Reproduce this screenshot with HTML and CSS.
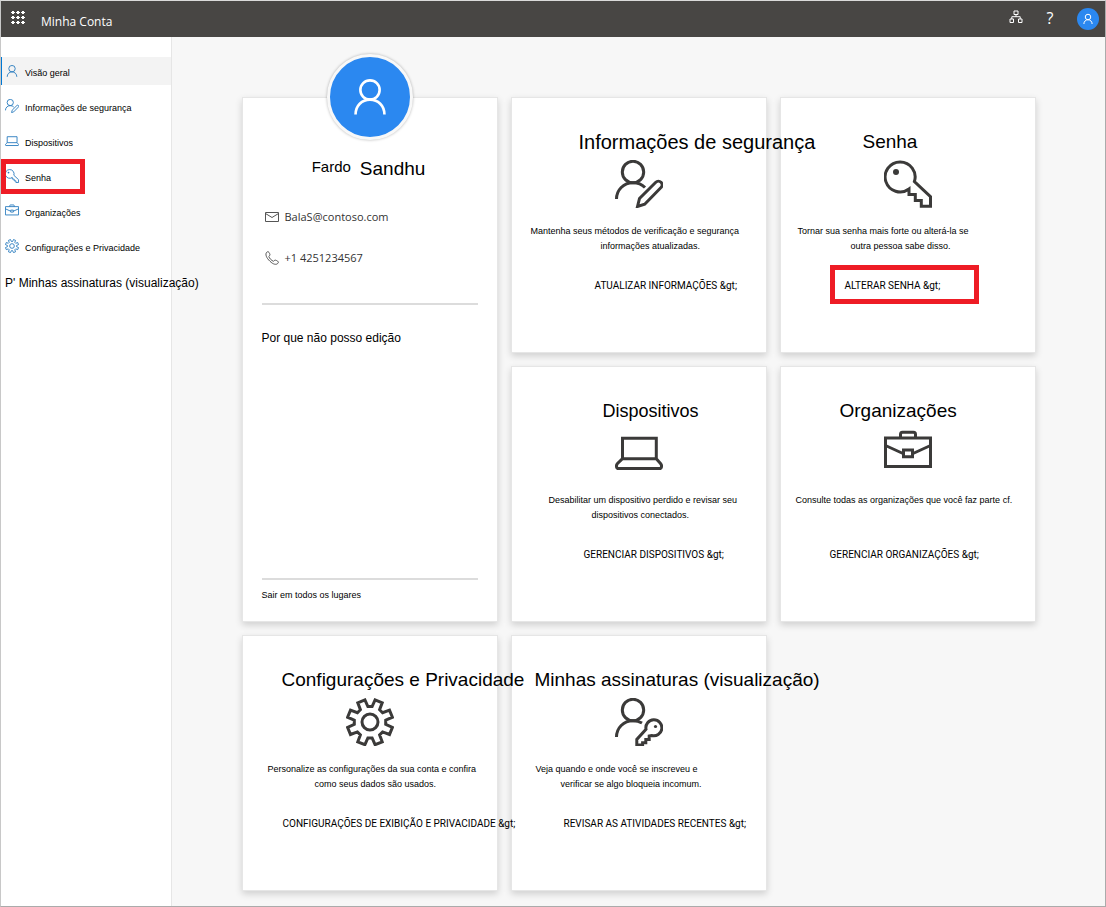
FILE: index.html
```html
<!DOCTYPE html>
<html lang="pt">
<head>
<meta charset="utf-8">
<title>Minha Conta</title>
<meta name="viewport" content="width=device-width, initial-scale=1">
<link rel="stylesheet" href="styles.css">
</head>
<body>
<svg class="sprite" aria-hidden="true">
  <symbol id="person" viewBox="0 0 48 48"><circle cx="24" cy="16" r="11"/><path d="M7.500 44c0-10 7.300-17 16.500-17s16.500 7 16.500 17"/></symbol>
  <symbol id="person-edit" viewBox="0 0 48 48"><circle cx="18" cy="12" r="10.7"/><path d="M1.500 39c0-9 7-16.300 16.500-16.300 5 0 9 1.700 12 4.800M22.500 46.500l2-8L40.800 22.300a3.600 3.600 0 0 1 5.200 5.200L29.700 44.300z"/></symbol>
  <symbol id="laptop" viewBox="0 0 48 48"><path d="M7.500 9.300h33.800v20.400H7.500zM7.500 29.700l-5.200 5c-1.600 2-.8 4.800 1 4.800h41.400c1.800 0 2.600-2.800 1-4.800l-4.400-5"/></symbol>
  <symbol id="key" viewBox="0 0 48 48"><circle class="solid" cx="12" cy="12" r="3"/><path d="M30.400 21.500A15 15 0 1 0 25 29v5.500h6.300v6h6v5.700h9.200v-9.500z"/></symbol>
  <symbol id="briefcase" viewBox="0 0 48 48"><path d="M1.500 9h45v28.500h-45zM16.500 9V5.500c0-1.500.5-2.200 2-2.200h11c1.500 0 2 .7 2 2.200V9M1.500 16.500 19 24.500M46.500 16.500 29 24.500M19.500 21h9v6.700h-9z"/></symbol>
  <symbol id="gear" viewBox="0 0 48 48"><circle cx="24" cy="24" r="8"/><path d="M11.800 4.800 18.900 1.900 21.900 8.600h4.200l3-6.700 7.100 2.900-2.600 6.900 3 3 6.900-2.600 2.900 7.100-6.700 3v4.200l6.700 3-2.900 7.100-6.900-2.600-3 3 2.600 6.900-7.100 2.900-3-6.700h-4.200l-3 6.700-7.100-2.900 2.600-6.900-3-3-6.900 2.600-2.900-7.100 6.700-3v-4.200l-6.700-3 2.900-7.100 6.900 2.600 3-3z"/></symbol>
  <symbol id="person-key" viewBox="0 0 48 48"><circle cx="18" cy="12" r="10.700"/><path d="M1.500 39c0-9 7-16.300 16.500-16.300 3.500 0 6.500.8 9 2.300M31 31.300a8 8 0 1 1 5.600 6.200l-2.400.5v3.500h-3.400v3.200h-3.200v2.200h-5.800v-5.500z"/><circle class="solid" cx="40.500" cy="28.500" r="1.600"/></symbol>
</svg>

<div class="app">
  <header class="topbar">
    <button class="topbar__button" aria-label="Aplicativos">
      <svg class="waffle" viewBox="0 0 14 14"><path d="M1 0h2v3H1zM0 1h4v1H0zM6 0h2v3H6zM5 1h4v1H5zM11 0h2v3h-2zM10 1h4v1h-4zM1 5h2v3H1zM0 6h4v1H0zM6 5h2v3H6zM5 6h4v1H5zM11 5h2v3h-2zM10 6h4v1h-4zM1 10h2v3H1zM0 11h4v1H0zM6 10h2v3H6zM5 11h4v1H5zM11 10h2v3h-2zM10 11h4v1h-4z"/></svg>
    </button>
    <span class="topbar__title">Minha Conta</span>
    <div class="topbar__tools">
      <button class="topbar__button" aria-label="Organização">
        <svg class="tool-icon" viewBox="0 0 14 14"><path d="M5 1h4v3.500H5zM1 9h3.500v3.500H1zM9.500 9H13v3.500H9.500zM7 4.500v2.200M2.800 9V6.700h8.400V9"/></svg>
      </button>
      <button class="topbar__button topbar__help" aria-label="Ajuda">?</button>
      <button class="topbar__button topbar__user" aria-label="Conta"><svg class="user-icon"><use href="#person"/></svg></button>
    </div>
  </header>

  <div class="body">
    <nav class="sidebar">
      <a class="nav nav--current" href="#"><svg class="nav__icon"><use href="#person"/></svg><span class="nav__text">Visão geral</span></a>
      <a class="nav" href="#"><svg class="nav__icon"><use href="#person-edit"/></svg><span class="nav__text">Informações de segurança</span></a>
      <a class="nav" href="#"><svg class="nav__icon"><use href="#laptop"/></svg><span class="nav__text">Dispositivos</span></a>
      <a class="nav nav--marked" href="#"><svg class="nav__icon"><use href="#key"/></svg><span class="nav__text">Senha</span></a>
      <a class="nav" href="#"><svg class="nav__icon"><use href="#briefcase"/></svg><span class="nav__text">Organizações</span></a>
      <a class="nav" href="#"><svg class="nav__icon"><use href="#gear"/></svg><span class="nav__text">Configurações e Privacidade</span></a>
      <a class="nav nav--large" href="#"><span class="nav__text">P' Minhas assinaturas (visualização)</span></a>
    </nav>

    <main class="cards">
      <section class="card profile">
        <div class="avatar"><svg class="avatar__icon"><use href="#person"/></svg></div>
        <h1 class="profile__name"><span class="profile__first">Fardo</span><span>Sandhu</span></h1>
        <ul class="contact">
          <li class="contact__row"><svg class="contact__icon" viewBox="0 0 14 14"><path d="M.5 2.500h13v9H.5zM.5 3.500 7 7.500l6.500-4"/></svg>BalaS@contoso.com</li>
          <li class="contact__row"><svg class="contact__icon" viewBox="0 0 14 14"><path d="M1.500 1.500C3 0 3.700.7 4.600 2.500c.7 1.400.3 1.900-.8 2.900.6 2 2.700 4.200 4.800 4.900 1-1.200 1.500-1.500 2.900-.8 1.900 1 2.500 1.600 1.200 3-1.500 1.500-4.500 1-7.700-2.200C1.200 6.800.2 3.400 1.500 1.500z"/></svg>+1 4251234567</li>
        </ul>
        <div class="profile__panel"><a class="link link--medium" href="#">Por que não posso edição</a></div>
        <div class="profile__footer"><a class="link" href="#">Sair em todos os lugares</a></div>
      </section>

      <section class="card security">
        <h2 class="card__title card__title--large">Informações de segurança</h2>
        <svg class="card__icon"><use href="#person-edit"/></svg>
        <p class="card__text">Mantenha seus métodos de verificação e segurança<span class="second">informações atualizadas.</span></p>
        <a class="card__action" href="#">ATUALIZAR INFORMAÇÕES &amp;gt;</a>
      </section>

      <section class="card password">
        <h2 class="card__title">Senha</h2>
        <svg class="card__icon"><use href="#key"/></svg>
        <p class="card__text">Tornar sua senha mais forte ou alterá-la se<span class="second">outra pessoa sabe disso.</span></p>
        <a class="card__action card__action--marked" href="#">ALTERAR SENHA &amp;gt;</a>
      </section>

      <section class="card devices">
        <h2 class="card__title card__title--small">Dispositivos</h2>
        <svg class="card__icon"><use href="#laptop"/></svg>
        <p class="card__text">Desabilitar um dispositivo perdido e revisar seu<span class="second">dispositivos conectados.</span></p>
        <a class="card__action" href="#">GERENCIAR DISPOSITIVOS &amp;gt;</a>
      </section>

      <section class="card organizations">
        <h2 class="card__title">Organizações</h2>
        <svg class="card__icon"><use href="#briefcase"/></svg>
        <p class="card__text">Consulte todas as organizações que você faz parte cf.</p>
        <a class="card__action" href="#">GERENCIAR ORGANIZAÇÕES &amp;gt;</a>
      </section>

      <section class="card privacy">
        <h2 class="card__title">Configurações e Privacidade</h2>
        <svg class="card__icon"><use href="#gear"/></svg>
        <p class="card__text">Personalize as configurações da sua conta e confira<span class="second">como seus dados são usados.</span></p>
        <a class="card__action" href="#">CONFIGURAÇÕES DE EXIBIÇÃO E PRIVACIDADE &amp;gt;</a>
      </section>

      <section class="card signins">
        <h2 class="card__title">Minhas assinaturas (visualização)</h2>
        <svg class="card__icon"><use href="#person-key"/></svg>
        <p class="card__text">Veja quando e onde você se inscreveu e<span class="second">verificar se algo bloqueia incomum.</span></p>
        <a class="card__action" href="#">REVISAR AS ATIVIDADES RECENTES &amp;gt;</a>
      </section>
    </main>
  </div>
</div>
</body>
</html>
```

FILE: styles.css
```css
*, *::before, *::after { box-sizing: border-box; }

body {
  margin: 0;
  font-family: "Liberation Sans", Arial, sans-serif;
  font-size: 9px;
  color: #000;
}

a { color: inherit; text-decoration: none; }
h1, h2, p, ul { margin: 0; padding: 0; font-weight: 400; }
button { border: 0; padding: 0; background: none; color: inherit; font: inherit; cursor: pointer; }

svg { fill: none; stroke: currentColor; }
.sprite { position: absolute; width: 0; height: 0; }
.solid { fill: currentColor; stroke: none; }

.app {
  display: flex;
  flex-direction: column;
  min-height: 100vh;
  border: 1px solid #ababab;
  border-top-color: #dadada;
  border-left-color: #c8c8c8;
  background: #f7f7f7;
}

/* Top bar */
.topbar {
  display: flex;
  align-items: center;
  height: 36px;
  padding: 0 6px 0 10px;
  background: #484644;
  color: #fff;
}
.topbar__button { display: flex; align-items: center; justify-content: center; }
.waffle { width: 14px; height: 14px; margin-bottom: 2px; fill: #fff; stroke: none; }
.topbar__title {
  margin-left: 16px;
  padding-top: 5px;
  font-family: "Open Sans", "Noto Sans", sans-serif;
  font-size: 12px;
}
.topbar__tools { display: flex; align-items: center; gap: 17px; margin-left: auto; }
.tool-icon { width: 14px; height: 14px; margin-bottom: 4px; }
.topbar__help {
  width: 20px;
  padding-bottom: 3px;
  font-family: "Open Sans", "Noto Sans", sans-serif;
  font-size: 16px;
}
.topbar__user { width: 22px; height: 22px; border-radius: 50%; background: #2b88f0; }
.user-icon { width: 12px; height: 12px; stroke-width: 4; }

.body { display: flex; flex: 1; }

/* Sidebar */
.sidebar {
  display: flex;
  flex-direction: column;
  flex: none;
  gap: 7px;
  width: 171px;
  padding-top: 20px;
  border-right: 1px solid #e6e6e6;
  background: #fff;
}
.nav {
  position: relative;
  display: flex;
  align-items: center;
  gap: 6px;
  height: 28px;
  padding-left: 4px;
  white-space: nowrap;
}
.nav__icon { width: 14px; height: 14px; margin-bottom: 1px; color: #2478bd; stroke-width: 3; }
.nav__text { padding-top: 3px; }
.nav--current { background: #f3f3f3; box-shadow: inset 1px 0 #0078d4; }
.nav--large { font-size: 12px; z-index: 1; }
.nav--marked::after {
  content: "";
  position: absolute;
  inset: -3px auto -4px 0;
  width: 84px;
  border: 5px solid #ee1c25;
}

/* Card grid */
.cards {
  flex: 1;
  display: grid;
  grid-template-columns: repeat(3, 256px);
  grid-auto-rows: minmax(256px, auto);
  align-content: start;
  justify-content: center;
  gap: 13px;
  padding: 60px 16px 12px;
}
.card {
  display: flex;
  flex-direction: column;
  align-items: flex-start;
  padding-top: 32px;
  border: 1px solid #e6e6e6;
  background: #fff;
  box-shadow: 0 3px 7px rgba(0, 0, 0, .16);
  white-space: nowrap;
}
.card__title { z-index: 1; font-size: 19px; line-height: 24px; }
.card__title--large { font-size: 20px; }
.card__title--small { font-size: 18px; }
.card__icon {
  align-self: center;
  width: 48px;
  height: 48px;
  margin: 6px 0 16px;
  color: #3b3a39;
  stroke-width: 3;
}
.card__text { min-height: 30px; line-height: 15px; }
.second { display: block; }
.card__action {
  z-index: 1;
  position: relative;
  margin-top: 25px;
  font-family: Roboto, "Liberation Sans", sans-serif;
  font-size: 10px;
  line-height: 14px;
}
.card__action--marked::after {
  content: "";
  position: absolute;
  left: -15px;
  top: -14px;
  width: 149px;
  height: 39px;
  border: 5px solid #ee1c25;
}

.security .card__title { margin-left: 67px; }
.security .card__text { margin-left: 19px; }
.security .second { margin-left: 70px; }
.security .card__action { margin-left: 83px; }

.password .card__title { margin-left: 82px; }
.password .card__text { margin-left: 17px; }
.password .second { margin-left: 53px; }
.password .card__action { margin-left: 64px; }

.devices .card__title { margin-left: 91px; }
.devices .card__text { margin-left: 37px; }
.devices .second { margin-left: 43px; }
.devices .card__action { margin-left: 72px; }

.organizations .card__title { margin-left: 59px; }
.organizations .card__text { margin-left: 15px; }
.organizations .card__action { margin-left: 49px; }

.privacy .card__title { margin-left: 39px; }
.privacy .card__text { margin-left: 25px; }
.privacy .second { margin-left: 47px; }
.privacy .card__action { margin-left: 40px; }

.signins .card__title { margin-left: 23px; }
.signins .card__text { margin-left: 24px; }
.signins .second { margin-left: 25px; }
.signins .card__action { margin-left: 52px; }

/* Profile card */
.profile { grid-row: span 2; align-items: stretch; padding: 0 19px 19px; }
.avatar {
  display: flex;
  align-items: center;
  justify-content: center;
  align-self: center;
  width: 86px;
  height: 86px;
  margin-top: -44px;
  border: 3px solid #f8f8f8;
  border-radius: 50%;
  background: #2b88f0;
  box-shadow: 0 0 3px rgba(0, 0, 0, .3);
  color: #fff;
}
.avatar__icon { width: 42px; height: 42px; stroke-width: 3; }
.profile__name {
  display: flex;
  align-items: center;
  justify-content: center;
  gap: 9px;
  margin-top: 15px;
  padding-right: 2px;
  font-size: 19px;
  line-height: 24px;
}
.profile__first { padding-bottom: 4px; font-size: 15px; }
.contact {
  display: flex;
  flex-direction: column;
  gap: 21px;
  margin-top: 24px;
  padding: 0 0 35px 3px;
  border-bottom: 2px solid #dcdcdc;
  font-family: "Open Sans", "Noto Sans", sans-serif;
  font-size: 11px;
  line-height: 20px;
  color: #333;
  list-style: none;
}
.contact__row { display: flex; align-items: center; gap: 6px; }
.contact__icon { width: 14px; height: 14px; color: #555; }
.profile__panel { flex: 1; padding-top: 24px; border-bottom: 2px solid #dcdcdc; }
.profile__footer { padding-top: 8px; line-height: 14px; }
.link--medium { font-size: 12px; line-height: 18px; }
```
